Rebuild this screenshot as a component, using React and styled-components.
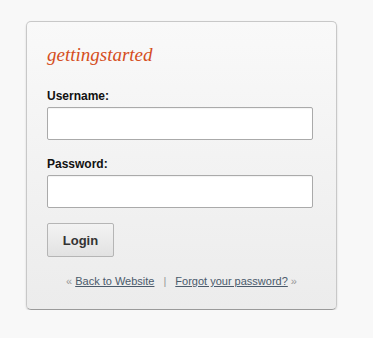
import React from 'react';
import styled, { createGlobalStyle } from 'styled-components';

const GlobalStyle = createGlobalStyle`
  html, body {
    margin: 0;
    padding: 0;
    background: #f8f8f8;
    font-family: "Liberation Sans", Arial, sans-serif;
  }
`;

export default function App() {
  return (
    <>
      <GlobalStyle />
      <Page>
        <Card>
          <Title>gettingstarted</Title>
          <Form onSubmit={(e) => e.preventDefault()}>
            <Label htmlFor="username">Username:</Label>
            <Input id="username" type="text" />
            <Label htmlFor="password" $spaced>Password:</Label>
            <Input id="password" type="password" />
            <Button type="submit">Login</Button>
          </Form>
          <Footer>
            <Muted>«</Muted>
            <Link href="#">Back to Website</Link>
            <Separator>|</Separator>
            <Link href="#">Forgot your password?</Link>
            <Muted>»</Muted>
          </Footer>
        </Card>
      </Page>
    </>
  );
}

const Page = styled.div`
  padding: 21px 0 0 26px;
`;

const Card = styled.div`
  box-sizing: border-box;
  width: 311px;
  height: 289px;
  padding: 21px 23px 0 20px;
  border: 1px solid #c8c8c8;
  border-bottom-color: #9a9a9a;
  border-radius: 5px;
  background: linear-gradient(to bottom, #f9f9f9, #ececec);
  box-shadow: 0 1px 2px rgba(0, 0, 0, 0.15);
`;

const Title = styled.h1`
  margin: 0;
  font-family: "Liberation Serif", "Times New Roman", serif;
  font-style: italic;
  font-weight: normal;
  font-size: 19px;
  line-height: 24px;
  color: #d54e21;
`;

const Form = styled.form`
  display: flex;
  flex-direction: column;
  align-items: flex-start;
  margin-top: 22px;
`;

const Label = styled.label`
  font-size: 12px;
  line-height: 14px;
  font-weight: bold;
  color: #111;
  margin-top: ${(p) => (p.$spaced ? '17px' : '0')};
  margin-bottom: 4px;
`;

const Input = styled.input`
  box-sizing: border-box;
  width: 100%;
  height: 33px;
  margin: 0;
  border: 1px solid #aaa;
  border-radius: 2px;
  background: #fff;
  box-shadow: inset 0 1px 1px rgba(0, 0, 0, 0.05);
  font-size: 14px;
`;

const Button = styled.button`
  box-sizing: border-box;
  width: 67px;
  height: 34px;
  margin-top: 15px;
  border: 1px solid #b5b5b5;
  border-radius: 2px;
  background: linear-gradient(to bottom, #f3f3f3, #e2e2e2);
  font-family: "Liberation Sans", Arial, sans-serif;
  font-size: 13px;
  font-weight: bold;
  color: #333;
`;

const Footer = styled.p`
  margin: 17px -3px 0 0;
  text-align: center;
  font-size: 11px;
  line-height: 14px;
  color: #999;
`;

const Muted = styled.span`
  color: #999;
  margin: 0 3px;
`;

const Separator = styled.span`
  color: #999;
  margin: 0 9px;
`;

const Link = styled.a`
  color: #4a5a6b;
  text-decoration: underline;
`;
